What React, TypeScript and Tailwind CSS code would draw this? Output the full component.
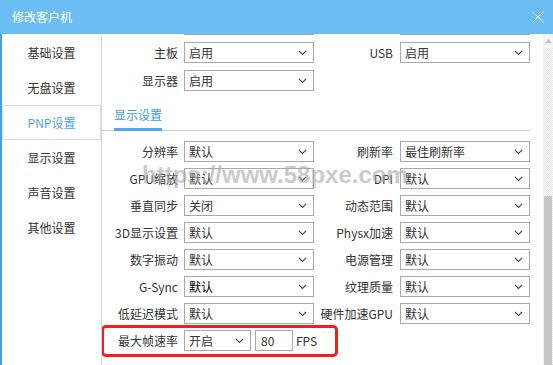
import React from 'react';

type Row = [string, string, string?, string?];

const topRows: Row[] = [
  ['主板', '启用', 'USB', '启用'],
  ['显示器', '启用'],
];

const displayRows: Row[] = [
  ['分辨率', '默认', '刷新率', '最佳刷新率'],
  ['GPU缩放', '默认', 'DPI', '默认'],
  ['垂直同步', '关闭', '动态范围', '默认'],
  ['3D显示设置', '默认', 'Physx加速', '默认'],
  ['数字振动', '默认', '电源管理', '默认'],
  ['G-Sync', '默认', '纹理质量', '默认'],
  ['低延迟模式', '默认', '硬件加速GPU', '默认'],
];

const menu = ['基础设置', '无盘设置', 'PNP设置', '显示设置', '声音设置', '其他设置'];

const Chevron = () => (
  <svg className="w-[9px] h-[6px]" viewBox="0 0 9 6" fill="none">
    <path d="M1 1l3.5 3.5L8 1" stroke="#4a4a4a" strokeWidth={1.1} />
  </svg>
);

const Select: React.FC<{ value: string; width?: string; strong?: boolean }> = ({ value, width = 'w-[130px]', strong }) => (
  <div className={`${width} h-[21px] border border-[#a9a9a9] bg-white flex items-center justify-between pl-[4px] pr-[6px]`}>
    <span className={strong ? 'text-black' : 'text-[#333]'}>{value}</span>
    <Chevron />
  </div>
);

const FormRow: React.FC<{ row: Row; className?: string }> = ({ row, className = '' }) => (
  <div className={`flex items-center h-[21px] ${className}`}>
    <div className="w-[82px] pr-[6px] text-right text-[#333]">{row[0]}</div>
    <Select value={row[1]} strong={row[0] === 'G-Sync'} />
    {row[2] !== undefined && (
      <>
        <div className="w-[86px] pr-[7px] text-right text-[#333]">{row[2]}</div>
        <Select value={row[3] ?? ''} />
      </>
    )}
  </div>
);

export default function App() {
  return (
    <div className="w-[553px] h-[365px] overflow-hidden bg-white text-[12px] leading-none font-['Noto_Sans_CJK_SC','Noto_Sans',sans-serif]">
      <div className="h-[34px] bg-[#6dbdf5] flex items-center justify-between pl-[12px] pr-[9px]">
        <span className="text-white text-[12px]">修改客户机</span>
        <svg className="w-[12px] h-[12px]" viewBox="0 0 12 12" fill="none">
          <path d="M0.5 0.5l11 11M11.5 0.5l-11 11" stroke="white" strokeWidth={1} />
        </svg>
      </div>

      <div className="flex h-[331px]">
        <div className="w-[102px] border-l-2 border-l-[#4c9de0] border-r border-r-[#d9d9d9] pt-[1px]">
          {menu.map((m) => (
            <div
              key={m}
              className={
                m === 'PNP设置'
                  ? 'h-[35px] flex items-center justify-center border border-[#dcdcdc] text-[#4ea4f0] bg-white'
                  : 'h-[35px] flex items-center justify-center text-[#333]'
              }
            >
              {m}
            </div>
          ))}
        </div>

        <div className="relative flex-1 overflow-hidden">
          <div className="flex flex-col">
            <div className="flex items-center h-[21px] -mt-[20px]">
              <div className="w-[82px]" />
              <div className="w-[130px] h-[21px] border border-[#a9a9a9]" />
              <div className="w-[86px]" />
              <div className="w-[130px] h-[21px] border border-[#a9a9a9]" />
            </div>
            {topRows.map((r) => (
              <FormRow key={r[0]} row={r} className="mt-[7px]" />
            ))}

            <div className="mt-[9px] flex items-end border-b border-[#d0d0d0] w-[428px] ml-0">
              <div className="ml-[12px] h-[31px] flex items-center pt-[1px] border-b-[3px] border-[#4fa7f3] text-[#3d9bec] -mb-px">
                显示设置
              </div>
            </div>

            <div className="flex flex-col gap-[6px] mt-[10px]">
              {displayRows.map((r) => (
                <FormRow key={r[0]} row={r} />
              ))}
              <div className="relative flex items-center h-[21px]">
                <div className="w-[82px] pr-[6px] text-right text-[#333]">最大帧速率</div>
                <Select value="开启" width="w-[67px]" />
                <div className="ml-[4px] w-[38px] h-[21px] border border-[#a9a9a9] flex items-center pl-[5px] text-[#333]">80</div>
                <span className="ml-[3px] text-[#333]">FPS</span>
                <div className="absolute -left-[1px] -top-[5px] w-[237px] h-[32px] border-[3px] border-[#f51c1c] rounded-[5px]" />
              </div>
            </div>
          </div>

          <div className="absolute left-[40px] top-[129px] text-[24px] font-bold text-[#a8a8a8] opacity-60 font-['Liberation_Sans',sans-serif] whitespace-nowrap">
            https://www.58pxe.com
          </div>
        </div>

        <div className="w-[10px] flex flex-col bg-[repeating-conic-gradient(#e4e4e4_0_25%,#ffffff_0_50%)] bg-[length:2px_2px]">
          <div className="h-[14px] flex items-center justify-center bg-[#f4f4f4]">
            <svg className="w-[7px] h-[4px]" viewBox="0 0 7 4">
              <path d="M3.5 0L7 4H0z" fill="#c4c4c4" />
            </svg>
          </div>
          <div className="h-[148px]" />
          <div className="flex-1 mx-[1px] bg-[#c6c6c6]" />
        </div>
      </div>
    </div>
  );
}
